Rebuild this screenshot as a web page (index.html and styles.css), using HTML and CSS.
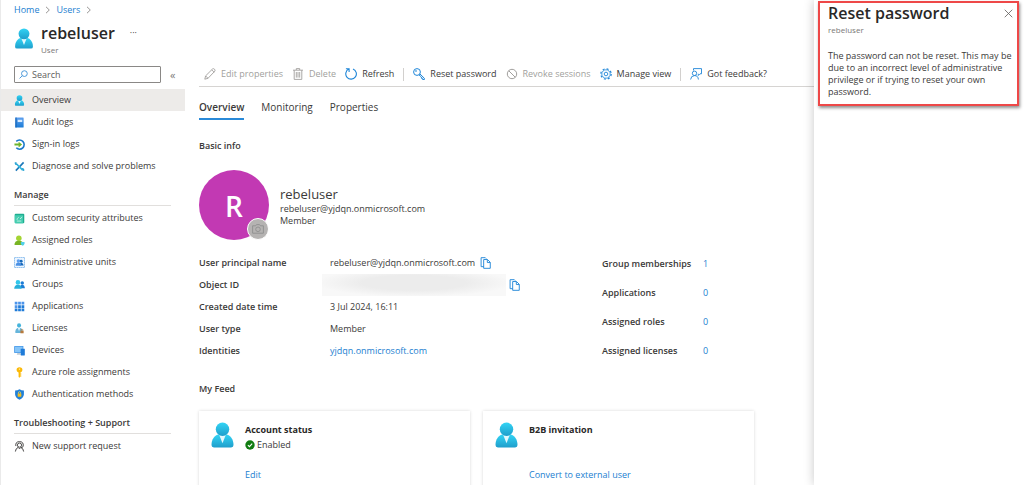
FILE: index.html
```html
<!DOCTYPE html>
<html lang="en">
<head>
<meta charset="utf-8">
<title>rebeluser - User</title>
<link rel="stylesheet" href="styles.css">
</head>
<body>
<svg class="sprite" aria-hidden="true">
  <defs>
    <linearGradient id="cyan" x1="0" y1="0" x2="0" y2="1"><stop offset="0" stop-color="#32d4f5"/><stop offset="1" stop-color="#1f9ecb"/></linearGradient>
    <linearGradient id="blue" x1="0" y1="0" x2="0" y2="1"><stop offset="0" stop-color="#5ea0ef"/><stop offset="1" stop-color="#1b7cd6"/></linearGradient>
    <symbol id="person" viewBox="0 0 24 27">
      <path d="M0.5 24C0.5 18 4 13.5 8 13h8c4 .5 7.500 5 7.500 11q0 2.500-2.500 2.500H3Q.5 26.500.5 24z" fill="url(#cyan)"/>
      <path d="M8.500 13.300h7L12 22z" fill="#e3f8fd"/>
      <circle cx="12" cy="7.500" r="7" fill="url(#cyan)"/>
    </symbol>
    <symbol id="copy" viewBox="0 0 12 13">
      <path d="M4 10.500H1.200V.7h4.600l1 1M4 2.700h4.200l3 3v6.600H4zM8 2.900V6h3" fill="none" stroke="#1f86d8" stroke-width="1"/>
    </symbol>
  </defs>
</svg>
<div class="portal">
  <div class="blade">
    <nav class="crumbs" aria-label="Breadcrumb">
      <a href="#">Home</a>
      <svg class="chev" viewBox="0 0 5 8"><path d="M1 .8L4.300 4 1 7.200"/></svg>
      <a href="#">Users</a>
      <svg class="chev" viewBox="0 0 5 8"><path d="M1 .8L4.300 4 1 7.200"/></svg>
    </nav>
    <header class="title">
      <svg class="title-icon"><use href="#person"/></svg>
      <div>
        <h1>rebeluser</h1>
        <p>User</p>
      </div>
      <button class="more" aria-label="More">···</button>
    </header>
    <div class="body">
      <aside class="side">
        <div class="search-row">
          <label class="search">
            <svg viewBox="0 0 10 10"><circle cx="6" cy="4" r="3.200" fill="none" stroke="#3a8fd6"/><path d="M3.700 6.300L.6 9.400" stroke="#3a8fd6"/></svg>
            <input type="text" placeholder="Search" aria-label="Search">
          </label>
          <button class="collapse" aria-label="Collapse menu">«</button>
        </div>
        <ul class="menu">
          <li><a href="#" class="current"><svg viewBox="-1 0 26 27"><use href="#person" width="24" height="27"/></svg>Overview</a></li>
          <li><a href="#"><svg viewBox="0 0 12 12"><rect x="1.500" y=".5" width="9" height="11" rx=".6" fill="url(#blue)"/><path d="M1.500.5h1.300v11H1.500z" fill="#1666b8"/><path d="M4 3h5v2.500H4z" fill="#d8ebff"/></svg>Audit logs</a></li>
          <li><a href="#"><svg viewBox="0 0 12 12"><path d="M2.500 2.600A5 5 0 1 1 2.500 9.600" fill="none" stroke="#1878ca" stroke-width="1.700"/><path d="M.5 5h4.500V3l3.800 3.100L5 9.200v-2H.5z" fill="#6fb52c"/></svg>Sign-in logs</a></li>
          <li><a href="#"><svg viewBox="0 0 12 12"><path d="M2 10.500L10.500 1.500" stroke="#1a77b9" stroke-width="1.700"/><path d="M2.500 3L9.500 10" stroke="#35b6dd" stroke-width="1.900"/><path d="M.7 1.500C.5 4 2.500 5 4.400 3.800L3 3.400 2.600 1zM11.300 10.600C11.500 8 9.500 7 7.800 8.400l1.300.3.500 2.300z" fill="#2ba4d4"/></svg>Diagnose and solve problems</a></li>
        </ul>
        <h2>Manage</h2>
        <ul class="menu">
          <li><a href="#"><svg viewBox="0 0 12 12"><rect x=".8" y=".8" width="10.400" height="10.400" rx="1" fill="#1fae90"/><path d="M.8 3v7.200q0 1 1 1h8V2.500h-9z" fill="#45cdb0"/><path d="M3 8.800h5M3.300 7.500C3.300 5 5 5.800 5 4.500M6.500 6.500L9 4.300" stroke="#d2f5ec" stroke-width=".9" fill="none"/></svg>Custom security attributes</a></li>
          <li><a href="#"><svg viewBox="0 0 12 12"><circle cx="5.300" cy="3.500" r="3" fill="#a4d433"/><path d="M.6 11V9.500q.5-3 3-3.300h3.500q2.500.3 2.500 3.300V11z" fill="#78b424"/><path d="M7.500 7.500h4v2q-.5 1.500-2 2.300-1.500-.8-2-2.300z" fill="#50d0e8"/></svg>Assigned roles</a></li>
          <li><a href="#"><svg viewBox="0 0 12 12"><rect x=".5" y=".5" width="11" height="11" fill="#edf6ff" stroke="#4b98e2" stroke-width=".8" stroke-dasharray="1.400 .8"/><circle cx="7.800" cy="4.700" r="1.600" fill="#1769bb"/><path d="M6 9.300q0-3 2-3t2.600 3z" fill="#1769bb"/><circle cx="4.800" cy="4.300" r="1.900" fill="#5ea0ef"/><path d="M1.800 9.600q.2-3.600 3-3.600t3 3.600z" fill="#4a90e4"/></svg>Administrative units</a></li>
          <li><a href="#"><svg viewBox="0 0 12 12"><circle cx="9" cy="4.300" r="1.900" fill="#1b7cd6"/><path d="M6.500 10q0-3.800 2.500-3.800t2.900 3.800z" fill="#1b7cd6"/><circle cx="4.300" cy="3.700" r="2.500" fill="#32c6eb"/><path d="M.2 10.500Q.5 6.200 4.300 6.200t4 4.300z" fill="#27afda"/></svg>Groups</a></li>
          <li><a href="#"><svg viewBox="0 0 12 12"><path d="M.8.8h3v3h-3zM4.500.8h3v3h-3zM8.200.8h3v3h-3zM.8 4.500h3v3h-3z" fill="#4c94ea"/><path d="M4.500 4.500h3v3h-3zM8.200 4.500h3v3h-3zM.8 8.200h3v3h-3zM4.500 8.200h3v3h-3zM8.200 8.200h3v3h-3z" fill="#1f7bd8"/></svg>Applications</a></li>
          <li><a href="#"><svg viewBox="0 0 12 12"><circle cx="5.500" cy="2.600" r="2.200" fill="#45b4dc"/><path d="M1.500 11V9q.3-3.300 4-3.700Q9.300 5.700 9.500 9v2z" fill="#66b5db"/><path d="M4.200 5.400h2.600L5.500 9z" fill="#e4f6fc"/><path d="M7 8.200h3.500v3H7z" fill="#b87a3d"/><path d="M7.800 8V7h1.800v1" fill="none" stroke="#b87a3d" stroke-width=".6"/></svg>Licenses</a></li>
          <li><a href="#"><svg viewBox="0 0 12 12"><rect x=".2" y="1" width="10" height="7.800" rx=".5" fill="#4094e6"/><path d="M1 1.800h8.400V8H1z" fill="#86c5f8"/><path d="M3.700 8.800h3l.8 1.900H3z" fill="#c2cbd3"/><rect x="7.300" y="4" width="4.500" height="7.400" rx=".4" fill="#1f7bd8"/></svg>Devices</a></li>
          <li><a href="#"><svg viewBox="0 0 12 12"><path d="M6 .3q3.200 0 3.200 3Q9.200 5.400 7 6v1h1v1.200H7v1h1v1.200H7L6 11.800 5 10.800V6Q2.800 5.400 2.800 3.300 2.800.3 6 .3z" fill="#fbb908"/><circle cx="6" cy="2.300" r=".8" fill="#fff3c6"/></svg>Azure role assignments</a></li>
          <li><a href="#"><svg viewBox="0 0 12 12"><path d="M6 .3Q8 1.600 10.800 1.600V6Q10.500 9.500 6 11.800 1.500 9.500 1.200 6V1.600Q4 1.600 6 .3z" fill="#2180d8"/><path d="M4.800 5.300V4.200q0-1.300 1.200-1.300t1.200 1.300v1.100" fill="none" stroke="#ffd84d" stroke-width=".8"/><rect x="4" y="4.900" width="4" height="3.500" rx=".4" fill="#f2bd1e"/></svg>Authentication methods</a></li>
        </ul>
        <h2>Troubleshooting + Support</h2>
        <ul class="menu">
          <li><a href="#"><svg viewBox="0 0 12 12" fill="none" stroke="#3b3a39" stroke-width="1"><path d="M2 5.500Q1.300.7 6 .7T10 5.500q-.4 2-2.500 2"/><circle cx="6" cy="4.500" r="2.300"/><path d="M1.500 11.500Q1.800 8 4.500 7l1.500 1.500L7.500 7q2.700 1 3 4.500"/></svg>New support request</a></li>
        </ul>
      </aside>
      <main class="main">
        <div class="commands">
          <button disabled><svg viewBox="0 0 12 12" fill="none" stroke="#a19f9d" stroke-width=".9"><path d="M.8 11.200l.8-3.300L8.500 1q1-.8 2 .2t.3 2L4 10.300zM7.700 1.800l2.500 2.500M1.600 7.900L4 10.300"/></svg>Edit properties</button>
          <button disabled><svg viewBox="0 0 12 12" fill="none" stroke="#a19f9d" stroke-width=".9"><path d="M1 2.200h10M4.300 2V.6h3.400V2M2.200 2.200v9.200h7.600V2.200M4.300 4v5.600M6 4v5.600M7.700 4v5.600"/></svg>Delete</button>
          <button><svg viewBox="0 0 12 12" fill="none" stroke="#1f86d8" stroke-width="1.100"><path d="M8 .9A5.300 5.300 0 1 1 3.700 1.100M.9.800h3.200V4"/></svg>Refresh</button>
          <span class="rule"></span>
          <button><svg viewBox="0 0 12 12" fill="none" stroke="#1f86d8" stroke-width="1"><circle cx="4" cy="4" r="3.400"/><circle cx="3" cy="3" r=".4"/><path d="M6.800 5.800l4.600 4.500v1.200H9.600v-1.200H8.400V9L5.900 6.800"/></svg>Reset password</button>
          <button disabled><svg viewBox="0 0 12 12" fill="none" stroke="#a19f9d" stroke-width="1"><circle cx="6" cy="6" r="4.700"/><path d="M2.700 2.700l6.600 6.600"/></svg>Revoke sessions</button>
          <button><svg viewBox="0 0 12 12" fill="none" stroke="#1f86d8"><circle cx="6" cy="6" r="4.200" stroke-width=".8"/><circle cx="6" cy="6" r="5.200" stroke-width="1.200" stroke-dasharray="2 2.084"/><circle cx="6" cy="6" r="1.800" stroke-width=".9"/></svg>Manage view</button>
          <span class="rule"></span>
          <button><svg viewBox="0 0 12 12" fill="none" stroke="#1f86d8" stroke-width=".9"><path d="M3.500 2.500V.6h8v5.200H10L8.300 7.500V5.800"/><circle cx="4.500" cy="5.300" r="2.200"/><path d="M.6 11.500Q.9 7.700 4.500 7.600t3.900 3.900"/></svg>Got feedback?</button>
        </div>
        <nav class="tabs">
          <a href="#" class="active">Overview</a>
          <a href="#">Monitoring</a>
          <a href="#">Properties</a>
        </nav>
        <h3>Basic info</h3>
        <section class="profile">
          <div class="avatar">R
            <button class="camera" aria-label="Change photo"><svg viewBox="0 0 12 10" fill="none" stroke="#8f8f8f" stroke-width=".9"><path d="M.6 1.800h3L4.500.6h3l.9 1.200h3v7.400H.6z"/><circle cx="6" cy="5.300" r="2.300"/></svg></button>
          </div>
          <div>
            <p class="name">rebeluser</p>
            <p>rebeluser@yjdqn.onmicrosoft.com</p>
            <p>Member</p>
          </div>
        </section>
        <section class="facts">
          <dl class="props">
            <dt>User principal name</dt><dd>rebeluser@yjdqn.onmicrosoft.com<button class="copy" aria-label="Copy user principal name"><svg><use href="#copy"/></svg></button></dd>
            <dt>Object ID</dt><dd class="object"><span class="redacted"></span><button class="copy" aria-label="Copy object ID"><svg><use href="#copy"/></svg></button></dd>
            <dt>Created date time</dt><dd>3 Jul 2024, 16:11</dd>
            <dt>User type</dt><dd>Member</dd>
            <dt>Identities</dt><dd><a href="#">yjdqn.onmicrosoft.com</a></dd>
          </dl>
          <dl class="counts">
            <dt>Group memberships</dt><dd><a href="#">1</a></dd>
            <dt>Applications</dt><dd><a href="#">0</a></dd>
            <dt>Assigned roles</dt><dd><a href="#">0</a></dd>
            <dt>Assigned licenses</dt><dd><a href="#">0</a></dd>
          </dl>
        </section>
        <h3>My Feed</h3>
        <section class="feed">
          <article class="card">
            <svg><use href="#person"/></svg>
            <div>
              <h4>Account status</h4>
              <p><svg class="ok" viewBox="0 0 10 10"><circle cx="5" cy="5" r="4.700" fill="#107c10"/><path d="M2.900 5.100l1.500 1.500 2.800-2.900" fill="none" stroke="#fff" stroke-width="1.100"/></svg>Enabled</p>
              <a href="#">Edit</a>
            </div>
          </article>
          <article class="card">
            <svg><use href="#person"/></svg>
            <div>
              <h4>B2B invitation</h4>
              <p></p>
              <a href="#">Convert to external user</a>
            </div>
          </article>
        </section>
      </main>
    </div>
  </div>
  <aside class="panel">
    <div class="notice">
      <div class="notice-head">
        <h2>Reset password</h2>
        <button aria-label="Close"><svg viewBox="0 0 10 10"><path d="M.8.8l8.400 8.400M9.200.8L.8 9.200" stroke="#605e5c" stroke-width=".9"/></svg></button>
      </div>
      <p class="sub">rebeluser</p>
      <p>The password can not be reset. This may be due to an incorrect level of administrative privilege or if trying to reset your own password.</p>
    </div>
  </aside>
</div>
</body>
</html>
```
FILE: styles.css
```css
* { box-sizing: border-box; }
body {
  margin: 0;
  background: #fff;
  color: #3b3a39;
  font: 9px/12px "Open Sans", "Noto Sans", sans-serif;
}
h1, h2, h3, h4, p, ul, dl, dd { margin: 0; padding: 0; }
ul { list-style: none; }
a { color: #1b80d0; text-decoration: none; }
button {
  padding: 0;
  border: 0;
  background: none;
  color: inherit;
  font: inherit;
}
svg { display: block; flex: none; }
.sprite { position: absolute; width: 0; height: 0; }

.portal { display: flex; height: 100vh; overflow: hidden; }
.blade { flex: 1; min-width: 0; border-left: 1px solid #eaeaea; }

.crumbs { display: flex; align-items: center; gap: 6px; padding: 4px 13px 0; }
.chev { width: 5px; height: 8px; fill: none; stroke: #979593; }

.title { display: flex; padding: 6px 13px 0; }
.title-icon { width: 20px; height: 21px; margin: 6px 7px 0 0; }
.title h1 { color: #292827; font-size: 16px; line-height: 22px; font-weight: 600; }
.title p { color: #7a7876; font-size: 8px; line-height: 11px; }
.more { align-self: flex-start; margin-left: 15px; line-height: 22px; }

.body { display: flex; padding-top: 10px; }
.side { flex: none; width: 184px; }
.search-row { display: flex; gap: 9px; padding: 1px 0 6px 13px; }
.search {
  display: flex;
  align-items: center;
  gap: 4px;
  width: 147px;
  height: 17px;
  padding-left: 4px;
  border: 1px solid #8a8886;
  border-radius: 1px;
}
.search svg { width: 9px; height: 9px; }
.search input { width: 100%; min-width: 0; padding: 0; border: 0; outline: 0; background: none; font: inherit; }
.search input::placeholder { color: #605e5c; opacity: 1; }
.collapse { color: #7a7876; font-size: 11px; }

.menu a {
  display: flex;
  align-items: center;
  gap: 7px;
  height: 22px;
  padding-left: 13px;
  color: #3b3a39;
}
.menu a.current { background: #edebe9; }
.menu svg { width: 11px; height: 11px; }
.side h2 {
  margin: 12px 14px 1px 13px;
  padding-bottom: 4px;
  border-bottom: 1px solid #e1dfdd;
  font-size: 9px;
  line-height: 12px;
  font-weight: 600;
}

.main { flex: 1; min-width: 0; padding-left: 14px; }
.commands {
  display: flex;
  align-items: center;
  gap: 9px;
  height: 22px;
  padding: 0 0 3px 5px;
  border-bottom: 1px solid #d6d4d2;
  white-space: nowrap;
}
.commands button { display: flex; align-items: center; gap: 5px; }
.commands button:disabled { color: #a19f9d; }
.commands svg { width: 12px; height: 12px; }
.rule { width: 1px; height: 13px; background: #d2d0ce; }

.tabs { display: flex; gap: 17px; margin: 11px 0 20px; font-size: 10px; line-height: 18px; }
.tabs a { height: 22px; color: #3b3a39; }
.tabs .active { border-bottom: 2px solid #2a8ad8; font-weight: 600; }

.main h3 { font-size: 9px; line-height: 12px; font-weight: 600; }
.profile { display: flex; gap: 11px; margin: 18px 0 12px; }
.profile > div:last-child { padding-top: 15px; }
.avatar {
  position: relative;
  width: 70px;
  height: 70px;
  border-radius: 50%;
  background: #c239b3;
  color: #fff;
  font-size: 28px;
  line-height: 72px;
  font-weight: 600;
  text-align: center;
}
.camera {
  position: absolute;
  right: 0;
  bottom: 0;
  display: grid;
  place-items: center;
  width: 22px;
  height: 22px;
  border: 1px solid #fff;
  border-radius: 50%;
  background: #b5b3b2;
}
.camera svg { width: 12px; height: 10px; }
.profile .name { font-size: 13px; line-height: 18px; }

.facts { display: flex; margin-bottom: 18px; }
.facts dl { display: grid; align-content: start; }
.facts dt { font-weight: 600; }
.facts dd { display: flex; align-items: center; gap: 5px; white-space: nowrap; }
.props { grid-template-columns: 131px 272px; grid-auto-rows: 22px; align-items: center; }
.counts { grid-template-columns: 101px 20px; grid-auto-rows: 29px; margin-top: -3px; align-items: center; }
.copy svg { width: 11px; height: 12px; }
.facts dd.object { gap: 3px; }
.redacted {
  width: 184px;
  height: 22px;
  margin-left: -8px;
  background: radial-gradient(ellipse at 50% 40%, #ececec 40%, #f8f8f8 75%);
}

.feed { display: grid; grid-template-columns: repeat(2, 271px); gap: 13px; margin-top: 16px; }
.card {
  display: flex;
  gap: 11px;
  height: 86px;
  padding: 11px 12px;
  box-shadow: 0 0 3px #00000028;
}
.card > svg { width: 23px; height: 26px; }
.card h4 { color: #292827; font-size: 9px; line-height: 15px; font-weight: 700; }
.card p { display: flex; align-items: center; gap: 2px; height: 16px; margin-bottom: 16px; }
.ok { width: 10px; height: 10px; }

.panel { position: relative; flex: none; width: 210px; padding: 1px 5px 1px 4px; background: #fff; box-shadow: 0 0 10px #00000038; }
.notice { padding: 0 2px 6px 8px; border: 2px solid #ee4848; box-shadow: 1px 2px 3px #00000070; }
.notice-head { display: flex; justify-content: space-between; align-items: center; padding-right: 2px; }
.notice h2 { color: #292827; font-size: 16px; line-height: 21px; font-weight: 600; }
.notice svg { width: 9px; height: 9px; }
.notice .sub { margin-bottom: 14px; color: #7a7876; font-size: 8px; }
```
